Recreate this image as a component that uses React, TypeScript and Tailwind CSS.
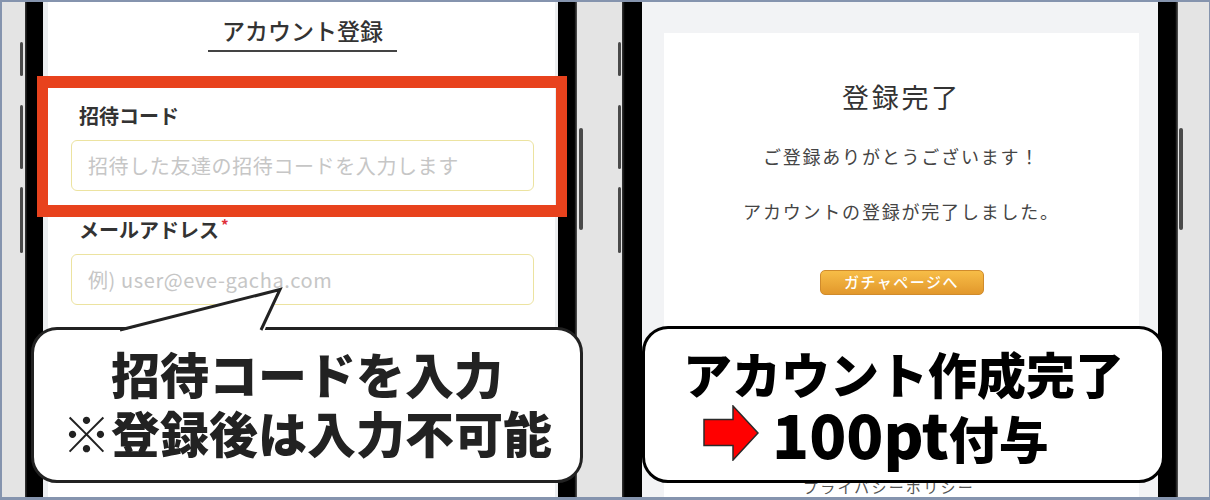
import React from 'react';

interface PhoneProps {
  leftBezel: string;
  rightBezel: string;
  leftBtnPos: string;
  rightBtnPos: string;
  children: React.ReactNode;
}

// side keys of the handset, drawn as small bars sticking out of the bezel
const SideKeys: React.FC<{ pos: string; right?: boolean }> = ({ pos, right }) =>
  right ? (
    <div className={`absolute top-[126px] h-[102px] w-[4px] rounded-sm bg-[#4a4a4a] ${pos}`} />
  ) : (
    <>
      <div className={`absolute top-[40px] h-[34px] w-[3px] rounded-sm bg-[#4a4a4a] ${pos}`} />
      <div className={`absolute top-[103px] h-[64px] w-[3px] rounded-sm bg-[#4a4a4a] ${pos}`} />
      <div className={`absolute top-[185px] h-[66px] w-[3px] rounded-sm bg-[#4a4a4a] ${pos}`} />
    </>
  );

const Phone: React.FC<PhoneProps> = ({ leftBezel, rightBezel, leftBtnPos, rightBtnPos, children }) => (
  <div className="relative flex h-full shrink-0">
    <SideKeys pos={leftBtnPos} />
    <SideKeys pos={rightBtnPos} right />
    <div className={`h-full bg-[linear-gradient(to_right,#3a3a3a,#000_14%)] ${leftBezel}`} />
    {children}
    <div className={`h-full bg-[linear-gradient(to_right,#000_86%,#5a5a5a)] ${rightBezel}`} />
  </div>
);

const Field: React.FC<{ label: string; required?: boolean; placeholder: string; className?: string }> = ({
  label,
  required,
  placeholder,
  className,
}) => (
  <div className={className}>
    <div className="pl-[8px] text-[20px] font-bold leading-[28px] text-[#333]">
      {label}
      {required && <span className="ml-[2px] align-top text-[15px] leading-[18px] text-[#e0303a]">*</span>}
    </div>
    <div className="mt-[10px] flex h-[51px] items-center rounded-[6px] border-[1.5px] border-[#ece3a0] bg-white pl-[16px] text-[20px] tracking-[0.6px] text-[#c6c6c6]">
      {placeholder}
    </div>
  </div>
);

const RedArrow: React.FC = () => (
  <svg width="56" height="56" viewBox="0 0 56 56" className="shrink-0">
    <polygon
      points="1,14.5 30,14.5 30,1 55,28 30,55 30,40.5 1,40.5"
      fill="#ff0000"
      stroke="#2a2a2a"
      strokeWidth="1.5"
      strokeLinejoin="miter"
    />
  </svg>
);

const App: React.FC = () => {
  return (
    <div className="relative h-[500px] w-[1210px] overflow-hidden border-b-[3px] border-l-2 border-r border-t-2 border-[#8594ae] bg-[#e4e4e4] font-['Noto_Sans_CJK_JP',sans-serif]">
      <div className="flex h-full gap-[45px] pl-[23px]">
        {/* left handset: signup form */}
        <Phone leftBezel="w-[18px]" rightBezel="w-[19px]" leftBtnPos="-left-[5px]" rightBtnPos="-right-[6px]">
          <div className="h-full w-[515px] bg-[#eceef0] pl-[5px] pr-[3px]">
            <div className="h-full bg-white pl-[23px] pr-[21px] pt-[13px]">
              <div className="mx-auto w-[189px] border-b-2 border-[#444] pb-[5px] text-center text-[23px] font-medium leading-[30px] text-[#333]">
                アカウント登録
              </div>
              <Field className="mt-[50px]" label="招待コード" placeholder="招待した友達の招待コードを入力します" />
              <Field className="mt-[25px]" label="メールアドレス" required placeholder="例) user@eve-gacha.com" />
            </div>
          </div>
        </Phone>

        {/* right handset: signup complete */}
        <Phone leftBezel="w-[20px]" rightBezel="w-[20px]" leftBtnPos="-left-[4px]" rightBtnPos="-right-[5px]">
          <div className="h-full w-[516px] bg-[#f2f3f5] pl-[22px] pr-[19px] pt-[31px]">
            <div className="flex h-full flex-col items-center bg-white pt-[44px] text-[#333]">
              <div className="text-[27px] leading-[40px] tracking-[0.1em]">登録完了</div>
              <p className="mt-[25px] text-[18px] leading-[28px] tracking-[0.1em] text-[#444]">ご登録ありがとうございます！</p>
              <p className="mt-[27px] text-[18px] leading-[28px] tracking-[0.1em] text-[#444]">アカウントの登録が完了しました。</p>
              <button className="mt-[45px] h-[43px] w-[164px] rounded-[5px] border border-[#d08b2c] bg-[linear-gradient(to_bottom,#f7bd47,#e2982c)] text-[15px] font-medium tracking-[0.1em] text-white">
                ガチャページへ
              </button>
              <div className="mr-[25px] mt-[182px] text-[15px] leading-[20px] tracking-[0.15em] text-[#555]">プライバシーポリシー</div>
            </div>
          </div>
        </Phone>
      </div>

      {/* highlight frame round the invite code field */}
      <div className="absolute left-[35px] top-[74px] h-[141px] w-[530px] border-[11px] border-y-[12px] border-[#e8421d]" />

      {/* left callout */}
      <div className="absolute left-[29px] top-[325px] flex h-[156px] w-[552px] flex-col items-center justify-center rounded-[26px] border-[3px] border-[#222] bg-white pb-[6px] text-[49px] font-black leading-[59px] text-[#222]">
        <svg width="175" height="47" viewBox="115 286 175 47" className="absolute -top-[44px] left-[81px]">
          <polygon points="117,332 280,289 264,332" fill="#fff" />
          <polyline points="120,330 280,289.5 261,330" fill="none" stroke="#222" strokeWidth="3" strokeLinejoin="miter" />
        </svg>
        <div>招待コードを入力</div>
        <div>※登録後は入力不可能</div>
      </div>

      {/* right callout */}
      <div className="absolute left-[640px] top-[324px] flex h-[157px] w-[523px] flex-col rounded-[26px] border-[3px] border-black bg-white pt-[14px] font-black text-black">
        <div className="text-center text-[49px] leading-[59px]">アカウント作成完了</div>
        <div className="flex items-center pl-[58px]">
          <RedArrow />
          <div className="ml-[13px] flex items-baseline leading-none">
            <span className="text-[61px]">100pt</span>
            <span className="text-[50px]">付与</span>
          </div>
        </div>
      </div>
    </div>
  );
};

export default App;
